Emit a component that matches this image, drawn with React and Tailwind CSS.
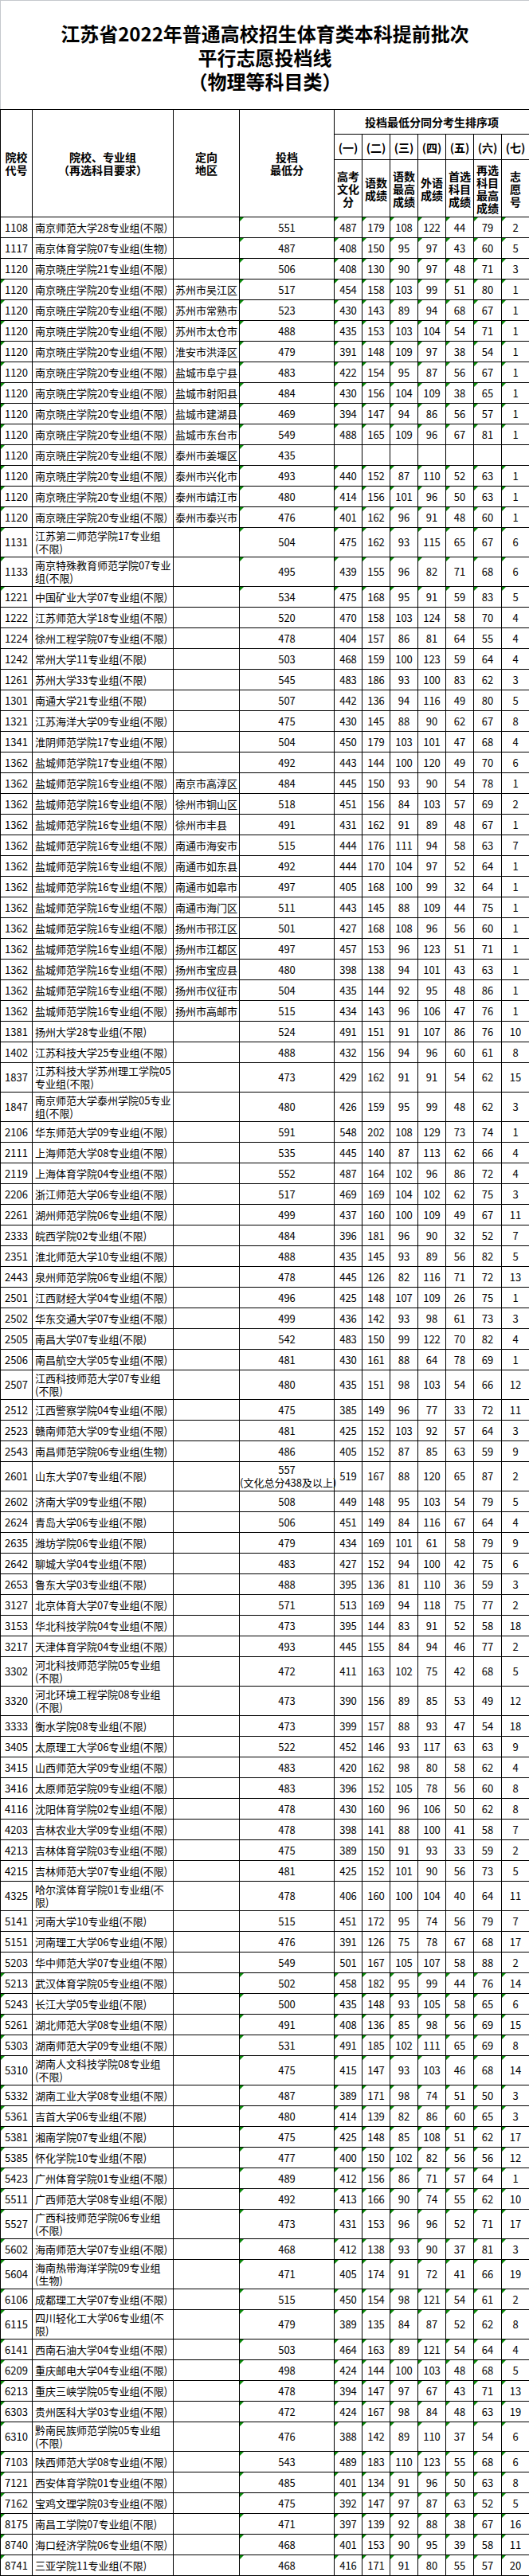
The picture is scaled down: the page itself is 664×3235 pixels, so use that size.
import React from "react";

// [代号, 院校专业组, 定向地区, 最低分, [一..七], 绿角标记: 0 无, 1 第4列起, 2 第1列+第4列起]
const rows = [
  ["1108", "南京师范大学28专业组(不限)", "", "551", [487, 179, 108, 122, 44, 79, 2], 1],
  ["1117", "南京体育学院07专业组(生物)", "", "487", [408, 150, 95, 97, 43, 60, 5], 1],
  ["1120", "南京晓庄学院21专业组(不限)", "", "506", [408, 130, 90, 97, 48, 71, 3], 1],
  ["1120", "南京晓庄学院20专业组(不限)", "苏州市吴江区", "517", [454, 158, 103, 99, 51, 80, 1], 2],
  ["1120", "南京晓庄学院20专业组(不限)", "苏州市常熟市", "523", [430, 143, 89, 94, 68, 67, 1], 2],
  ["1120", "南京晓庄学院20专业组(不限)", "苏州市太仓市", "488", [435, 153, 103, 104, 54, 71, 1], 2],
  ["1120", "南京晓庄学院20专业组(不限)", "淮安市洪泽区", "479", [391, 148, 109, 97, 38, 54, 1], 2],
  ["1120", "南京晓庄学院20专业组(不限)", "盐城市阜宁县", "483", [422, 154, 95, 87, 56, 67, 1], 2],
  ["1120", "南京晓庄学院20专业组(不限)", "盐城市射阳县", "484", [430, 156, 104, 109, 38, 65, 1], 2],
  ["1120", "南京晓庄学院20专业组(不限)", "盐城市建湖县", "469", [394, 147, 94, 86, 56, 57, 1], 2],
  ["1120", "南京晓庄学院20专业组(不限)", "盐城市东台市", "549", [488, 165, 109, 96, 67, 81, 1], 2],
  ["1120", "南京晓庄学院20专业组(不限)", "泰州市姜堰区", "435", [], 2],
  ["1120", "南京晓庄学院20专业组(不限)", "泰州市兴化市", "493", [440, 152, 87, 110, 52, 63, 1], 2],
  ["1120", "南京晓庄学院20专业组(不限)", "泰州市靖江市", "480", [414, 156, 101, 96, 50, 63, 1], 2],
  ["1120", "南京晓庄学院20专业组(不限)", "泰州市泰兴市", "476", [401, 162, 96, 91, 48, 60, 1], 2],
  ["1131", ["江苏第二师范学院17专业组", "(不限)"], "", "504", [475, 162, 93, 115, 65, 67, 6], 2],
  ["1133", ["南京特殊教育师范学院07专业", "组(不限)"], "", "495", [439, 155, 96, 82, 71, 68, 6], 2],
  ["1221", "中国矿业大学07专业组(不限)", "", "534", [475, 168, 95, 91, 59, 83, 5], 2],
  ["1222", "江苏师范大学18专业组(不限)", "", "520", [470, 158, 103, 124, 58, 70, 4], 0],
  ["1224", "徐州工程学院07专业组(不限)", "", "478", [404, 157, 86, 81, 64, 55, 4], 0],
  ["1242", "常州大学11专业组(不限)", "", "503", [468, 159, 100, 123, 59, 64, 4], 0],
  ["1261", "苏州大学33专业组(不限)", "", "545", [483, 186, 93, 100, 83, 62, 3], 0],
  ["1301", "南通大学21专业组(不限)", "", "507", [442, 136, 94, 116, 49, 80, 5], 0],
  ["1321", "江苏海洋大学09专业组(不限)", "", "475", [430, 145, 88, 90, 62, 67, 8], 0],
  ["1341", "淮阴师范学院17专业组(不限)", "", "504", [450, 179, 103, 101, 47, 68, 4], 0],
  ["1362", "盐城师范学院17专业组(不限)", "", "492", [443, 144, 100, 120, 49, 70, 6], 0],
  ["1362", "盐城师范学院16专业组(不限)", "南京市高淳区", "484", [445, 150, 93, 90, 54, 78, 1], 0],
  ["1362", "盐城师范学院16专业组(不限)", "徐州市铜山区", "518", [451, 156, 84, 103, 57, 69, 2], 0],
  ["1362", "盐城师范学院16专业组(不限)", "徐州市丰县", "491", [431, 162, 91, 89, 48, 67, 1], 0],
  ["1362", "盐城师范学院16专业组(不限)", "南通市海安市", "515", [444, 176, 111, 94, 58, 63, 7], 0],
  ["1362", "盐城师范学院16专业组(不限)", "南通市如东县", "492", [444, 170, 104, 97, 52, 64, 1], 0],
  ["1362", "盐城师范学院16专业组(不限)", "南通市如皋市", "497", [405, 168, 100, 99, 32, 64, 1], 0],
  ["1362", "盐城师范学院16专业组(不限)", "南通市海门区", "511", [443, 145, 88, 109, 44, 75, 1], 0],
  ["1362", "盐城师范学院16专业组(不限)", "扬州市邗江区", "501", [427, 168, 108, 96, 56, 60, 1], 0],
  ["1362", "盐城师范学院16专业组(不限)", "扬州市江都区", "497", [457, 153, 96, 123, 51, 71, 1], 0],
  ["1362", "盐城师范学院16专业组(不限)", "扬州市宝应县", "480", [398, 138, 94, 101, 43, 63, 1], 0],
  ["1362", "盐城师范学院16专业组(不限)", "扬州市仪征市", "504", [435, 144, 92, 95, 48, 86, 1], 0],
  ["1362", "盐城师范学院16专业组(不限)", "扬州市高邮市", "515", [434, 143, 96, 106, 47, 76, 1], 0],
  ["1381", "扬州大学28专业组(不限)", "", "524", [491, 151, 91, 107, 86, 76, 10], 0],
  ["1402", "江苏科技大学25专业组(不限)", "", "488", [432, 156, 94, 96, 60, 61, 8], 0],
  ["1837", ["江苏科技大学苏州理工学院05", "专业组(不限)"], "", "473", [429, 162, 91, 91, 54, 62, 15], 0],
  ["1847", ["南京师范大学泰州学院05专业", "组(不限)"], "", "480", [426, 159, 95, 99, 48, 62, 3], 0],
  ["2106", "华东师范大学09专业组(不限)", "", "591", [548, 202, 108, 129, 73, 74, 1], 0],
  ["2111", "上海师范大学08专业组(不限)", "", "535", [445, 140, 87, 113, 62, 66, 4], 0],
  ["2119", "上海体育学院04专业组(不限)", "", "552", [487, 164, 102, 96, 86, 72, 4], 0],
  ["2206", "浙江师范大学06专业组(不限)", "", "517", [469, 169, 104, 102, 62, 75, 3], 0],
  ["2261", "湖州师范学院06专业组(不限)", "", "499", [437, 160, 100, 109, 49, 67, 11], 0],
  ["2333", "皖西学院02专业组(不限)", "", "484", [396, 181, 96, 90, 32, 52, 7], 0],
  ["2351", "淮北师范大学10专业组(不限)", "", "488", [435, 145, 93, 89, 56, 82, 5], 0],
  ["2443", "泉州师范学院06专业组(不限)", "", "478", [445, 126, 82, 116, 71, 72, 13], 0],
  ["2501", "江西财经大学04专业组(不限)", "", "496", [425, 148, 107, 109, 26, 75, 1], 0],
  ["2502", "华东交通大学07专业组(不限)", "", "499", [436, 142, 93, 98, 61, 73, 3], 0],
  ["2505", "南昌大学07专业组(不限)", "", "542", [483, 150, 99, 122, 70, 82, 4], 0],
  ["2506", "南昌航空大学05专业组(不限)", "", "481", [430, 161, 88, 64, 78, 69, 1], 0],
  ["2507", ["江西科技师范大学07专业组", "(不限)"], "", "480", [435, 151, 98, 103, 54, 66, 12], 0],
  ["2512", "江西警察学院04专业组(不限)", "", "475", [385, 149, 96, 77, 33, 72, 11], 0],
  ["2523", "赣南师范大学09专业组(不限)", "", "481", [425, 152, 103, 92, 57, 64, 3], 0],
  ["2543", "南昌师范学院06专业组(生物)", "", "486", [405, 152, 87, 85, 63, 59, 9], 0],
  ["2601", "山东大学07专业组(不限)", "", ["557", "(文化总分438及以上)"], [519, 167, 88, 120, 65, 87, 2], 0],
  ["2602", "济南大学09专业组(不限)", "", "508", [449, 148, 95, 103, 54, 79, 5], 0],
  ["2624", "青岛大学06专业组(不限)", "", "506", [451, 149, 84, 116, 67, 64, 4], 0],
  ["2635", "潍坊学院06专业组(不限)", "", "479", [434, 169, 101, 61, 58, 79, 9], 0],
  ["2642", "聊城大学04专业组(不限)", "", "483", [427, 152, 94, 100, 42, 75, 6], 0],
  ["2653", "鲁东大学03专业组(不限)", "", "488", [395, 136, 81, 110, 36, 59, 3], 0],
  ["3127", "北京体育大学07专业组(不限)", "", "571", [513, 169, 94, 118, 75, 77, 2], 0],
  ["3153", "华北科技学院04专业组(不限)", "", "473", [395, 144, 83, 91, 52, 58, 18], 0],
  ["3217", "天津体育学院04专业组(不限)", "", "493", [445, 155, 84, 94, 46, 77, 2], 0],
  ["3302", ["河北科技师范学院05专业组", "(不限)"], "", "472", [411, 163, 102, 75, 42, 68, 5], 0],
  ["3320", ["河北环境工程学院08专业组", "(不限)"], "", "473", [390, 156, 89, 85, 53, 49, 12], 0],
  ["3333", "衡水学院08专业组(不限)", "", "473", [399, 157, 88, 93, 47, 54, 18], 0],
  ["3405", "太原理工大学06专业组(不限)", "", "522", [452, 146, 93, 117, 63, 63, 9], 0],
  ["3415", "山西师范大学09专业组(不限)", "", "483", [420, 162, 98, 80, 58, 62, 4], 0],
  ["3416", "太原师范学院09专业组(不限)", "", "483", [396, 152, 105, 78, 56, 60, 8], 0],
  ["4116", "沈阳体育学院02专业组(不限)", "", "478", [430, 160, 96, 106, 50, 62, 8], 0],
  ["4203", "吉林农业大学09专业组(不限)", "", "478", [398, 141, 88, 100, 41, 58, 7], 0],
  ["4213", "吉林体育学院03专业组(不限)", "", "475", [389, 150, 91, 93, 33, 59, 2], 0],
  ["4215", "吉林师范大学07专业组(不限)", "", "481", [425, 152, 101, 90, 56, 73, 5], 0],
  ["4325", ["哈尔滨体育学院01专业组(不", "限)"], "", "478", [406, 160, 100, 104, 40, 64, 11], 0],
  ["5141", "河南大学10专业组(不限)", "", "515", [451, 172, 95, 74, 56, 79, 7], 0],
  ["5151", "河南理工大学06专业组(不限)", "", "476", [391, 126, 75, 78, 67, 68, 17], 0],
  ["5203", "华中师范大学07专业组(不限)", "", "549", [501, 167, 105, 107, 58, 88, 2], 0],
  ["5213", "武汉体育学院05专业组(不限)", "", "502", [458, 182, 95, 99, 44, 76, 14], 2],
  ["5243", "长江大学05专业组(不限)", "", "500", [435, 148, 93, 105, 58, 65, 6], 2],
  ["5261", "湖北师范大学08专业组(不限)", "", "491", [408, 136, 85, 98, 56, 69, 15], 2],
  ["5303", "湖南师范大学09专业组(不限)", "", "531", [491, 185, 102, 111, 65, 69, 8], 2],
  ["5310", ["湖南人文科技学院08专业组", "(不限)"], "", "475", [415, 147, 93, 103, 46, 68, 14], 2],
  ["5332", "湖南工业大学08专业组(不限)", "", "487", [389, 171, 98, 74, 51, 50, 3], 2],
  ["5361", "吉首大学06专业组(不限)", "", "480", [414, 139, 82, 86, 60, 65, 3], 2],
  ["5381", "湘南学院07专业组(不限)", "", "475", [425, 148, 85, 108, 51, 62, 17], 2],
  ["5385", "怀化学院10专业组(不限)", "", "477", [400, 150, 102, 82, 56, 56, 12], 2],
  ["5423", "广州体育学院01专业组(不限)", "", "489", [412, 156, 86, 71, 57, 64, 1], 2],
  ["5511", "广西师范大学08专业组(不限)", "", "492", [413, 166, 90, 74, 55, 62, 10], 2],
  ["5527", ["广西科技师范学院06专业组", "(不限)"], "", "473", [431, 153, 96, 96, 52, 71, 17], 2],
  ["5602", "海南师范大学07专业组(不限)", "", "468", [412, 138, 93, 90, 37, 81, 3], 2],
  ["5604", ["海南热带海洋学院09专业组", "(生物)"], "", "471", [405, 174, 91, 72, 41, 66, 19], 2],
  ["6106", "成都理工大学07专业组(不限)", "", "515", [450, 154, 98, 121, 54, 61, 2], 2],
  ["6115", ["四川轻化工大学06专业组(不", "限)"], "", "479", [389, 135, 84, 87, 52, 62, 8], 2],
  ["6141", "西南石油大学04专业组(不限)", "", "503", [464, 163, 89, 121, 54, 64, 4], 2],
  ["6209", "重庆邮电大学04专业组(不限)", "", "498", [424, 144, 100, 103, 48, 68, 5], 2],
  ["6213", "重庆三峡学院05专业组(不限)", "", "478", [394, 147, 97, 67, 43, 71, 13], 2],
  ["6303", "贵州医科大学03专业组(不限)", "", "472", [424, 167, 98, 84, 48, 63, 19], 2],
  ["6310", ["黔南民族师范学院05专业组", "(不限)"], "", "476", [388, 142, 89, 110, 37, 54, 6], 2],
  ["7103", "陕西师范大学08专业组(不限)", "", "543", [489, 183, 110, 123, 55, 68, 6], 2],
  ["7121", "西安体育学院01专业组(不限)", "", "485", [401, 134, 91, 96, 50, 63, 8], 2],
  ["7162", "宝鸡文理学院03专业组(不限)", "", "475", [392, 147, 97, 87, 63, 52, 5], 2],
  ["8175", "南昌工学院07专业组(不限)", "", "471", [397, 139, 92, 88, 38, 67, 16], 2],
  ["8740", "海口经济学院06专业组(不限)", "", "468", [401, 153, 90, 95, 39, 58, 11], 2],
  ["8741", "三亚学院11专业组(不限)", "", "468", [416, 171, 91, 80, 55, 57, 20], 2],
];

const orderNo = ["(一)", "(二)", "(三)", "(四)", "(五)", "(六)", "(七)"];

const orderLabels = [
  ["高考", "文化", "分"],
  ["语数", "成绩"],
  ["语数", "最高", "成绩"],
  ["外语", "成绩"],
  ["首选", "科目", "成绩"],
  ["再选", "科目", "最高", "成绩"],
  ["志", "愿", "号"],
];

// Excel 的绿色小三角
const Tick = () => (
  <span className="absolute left-0 top-0 h-0 w-0 border-t-[5px] border-r-[5px] border-t-[#0a8a0a] border-r-transparent" />
);

const Lines = ({ v }) => {
  if (!Array.isArray(v)) return v;
  return v.map((t, i) => (
    <React.Fragment key={i}>
      {i > 0 && <br />}
      {t}
    </React.Fragment>
  ));
};

export default function App() {
  return (
    <div className="w-[664px] bg-white text-black font-['Noto_Sans_CJK_SC',sans-serif]">
      {/* Title */}
      <div className="h-[137px] border-t border-l border-[#c4c8cc] pt-[26px] text-center text-[24px] font-bold leading-[30px]">
        <div>江苏省2022年普通高校招生体育类本科提前批次</div>
        <div>平行志愿投档线</div>
        <div>（物理等科目类）</div>
      </div>

      <table className="w-[664px] table-fixed border-collapse text-[13px] leading-[16px]">
        <colgroup>
          <col className="w-[40px]" />
          <col className="w-[177px]" />
          <col className="w-[83px]" />
          <col className="w-[119px]" />
          <col className="w-[35px]" />
          <col className="w-[35px]" />
          <col className="w-[35px]" />
          <col className="w-[35px]" />
          <col className="w-[35px]" />
          <col className="w-[35px]" />
          <col className="w-[35px]" />
        </colgroup>
        <thead className="text-[14px] font-bold">
          <tr className="h-[31px]">
            <th rowSpan={3} className="border border-black p-0 font-bold">
              院校
              <br />
              代号
            </th>
            <th rowSpan={3} className="border border-black p-0 font-bold">
              院校、专业组
              <br />
              （再选科目要求）
            </th>
            <th rowSpan={3} className="border border-black p-0 font-bold">
              定向
              <br />
              地区
            </th>
            <th rowSpan={3} className="border border-black p-0 font-bold">
              投档
              <br />
              最低分
            </th>
            <th colSpan={7} className="border border-black p-0 font-bold">
              投档最低分同分考生排序项
            </th>
          </tr>
          <tr className="h-[32px]">
            {orderNo.map((n) => (
              <th key={n} className="border border-black p-0 font-bold whitespace-nowrap">
                {n}
              </th>
            ))}
          </tr>
          <tr className="h-[72px]">
            {orderLabels.map((l, i) => (
              <th key={i} className="border border-black p-0 font-bold">
                <Lines v={l} />
              </th>
            ))}
          </tr>
        </thead>
        <tbody>
          {rows.map(([code, name, area, score, vals, mark], i) => {
            const tall = Array.isArray(name) || Array.isArray(score);
            return (
              <tr key={i} className={tall ? "h-[37px]" : "h-[26px]"}>
                <td className="relative border border-black p-0 text-center">
                  {mark === 2 && <Tick />}
                  {code}
                </td>
                <td className="border border-black py-0 pl-[3px] pr-0 whitespace-nowrap">
                  <Lines v={name} />
                </td>
                <td className="border border-black py-0 pl-[2px] pr-0 whitespace-nowrap">{area}</td>
                <td className="relative border border-black p-0 text-center whitespace-nowrap">
                  {mark > 0 && <Tick />}
                  <Lines v={score} />
                </td>
                {orderNo.map((_, j) => (
                  <td key={j} className="relative border border-black p-0 text-center">
                    {mark > 0 && vals[j] !== undefined && <Tick />}
                    {vals[j]}
                  </td>
                ))}
              </tr>
            );
          })}
        </tbody>
      </table>
    </div>
  );
}
